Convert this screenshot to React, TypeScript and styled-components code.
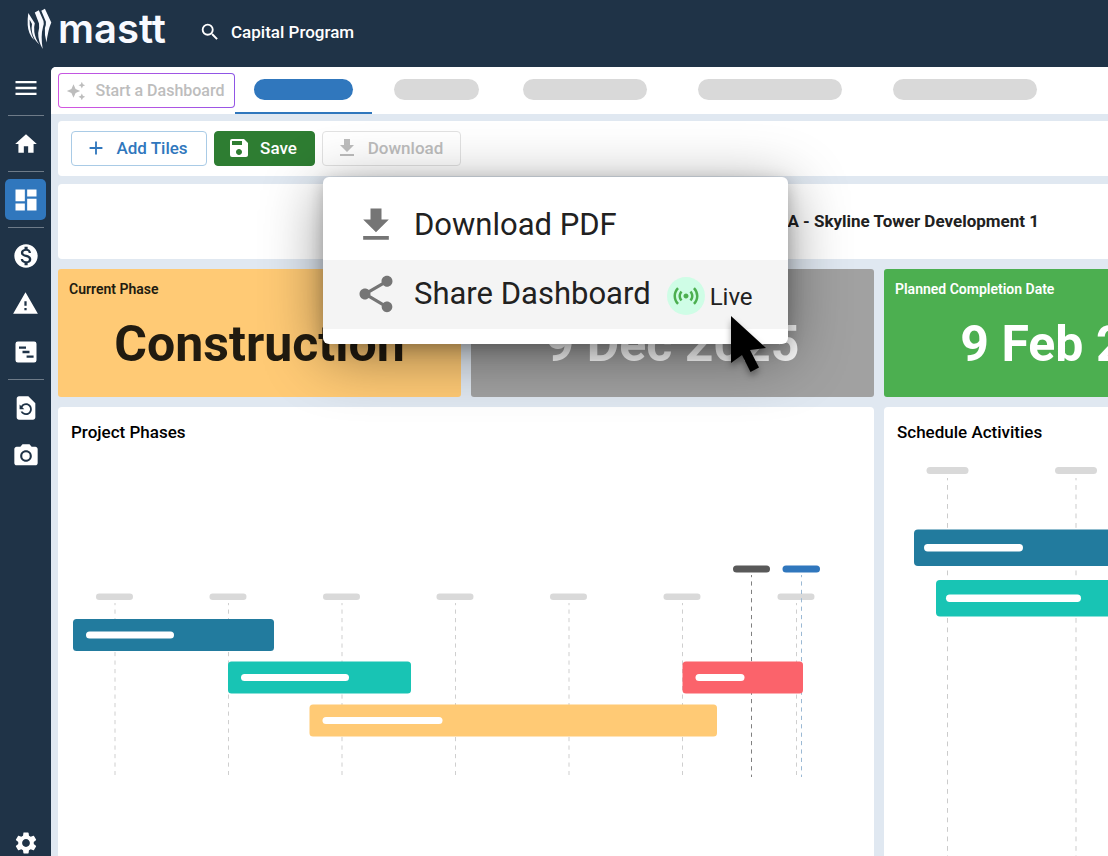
import React from "react";
import styled, { createGlobalStyle } from "styled-components";
import {
  MdAdd,
  MdAutoAwesome,
  MdCameraAlt,
  MdDashboard,
  MdFileDownload,
  MdHome,
  MdMenu,
  MdMonetizationOn,
  MdRestorePage,
  MdSave,
  MdSearch,
  MdSensors,
  MdSettings,
  MdShare,
  MdWarning,
} from "react-icons/md";

const color = {
  navy: "#1f3347",
  canvas: "#e0e8f1",
  blue: "#3077bd",
  green: "#2e7d32",
  placeholder: "#d9d9d9",
  disabled: "#bdbdbd",
  teal: "#227b9e",
  mint: "#18c4b4",
  amber: "#ffca75",
  coral: "#fb636b",
};

const GlobalStyle = createGlobalStyle`
  *, *::before, *::after { box-sizing: border-box; }
  body {
    margin: 0;
    background: ${color.navy};
    font-family: Roboto, "Liberation Sans", sans-serif;
    color: #212121;
    overflow: hidden;
  }
  button { font-family: inherit; cursor: pointer; }
  h1, h2, p { margin: 0; }
`;

const Page = styled.div`
  display: flex;
  flex-direction: column;
  height: 100vh;
`;

const Header = styled.header`
  display: flex;
  align-items: center;
  flex: none;
  height: 67px;
  padding: 0 0 4px 26px;
  color: #fff;
`;

const Brand = styled.a`
  display: flex;
  align-items: center;
  gap: 6px;
  width: 173px;
  color: #f8faff;
  text-decoration: none;
`;

const BrandName = styled.span`
  padding-bottom: 6px;
  font: 600 40px/48px Inter, sans-serif;
`;

const ProgramButton = styled.button`
  display: flex;
  align-items: center;
  gap: 10px;
  padding: 0;
  border: 0;
  background: none;
  color: #fff;
  font-size: 17px;
  font-weight: 500;
  line-height: 24px;
`;

const Body = styled.div`
  display: flex;
  flex: 1;
  min-height: 0;
`;

const Sidebar = styled.nav`
  display: flex;
  flex-direction: column;
  align-items: center;
  flex: none;
  width: 51px;
`;

const NavGroup = styled.div`
  display: flex;
  flex-direction: column;
  align-items: center;
  gap: 7px;
  width: 36px;
  padding: 7px 0;
  border-top: 1px solid #6e7b88;

  &:first-child {
    padding: 0 0 7px;
    border-top: 0;
  }
`;

const NavFooter = styled.div`
  flex: none;
  height: 34px;
  margin-top: auto;
`;

const NavButton = styled.button<{ $active?: boolean }>`
  display: flex;
  align-items: center;
  justify-content: center;
  flex: none;
  width: 41px;
  height: 41px;
  padding: 0;
  border: 0;
  border-radius: 5px;
  background: ${(p) => (p.$active ? color.blue : "transparent")};
  color: #fff;
`;

const Main = styled.main`
  display: flex;
  flex-direction: column;
  flex: 1;
  min-width: 0;
  overflow: hidden;
  border-top-left-radius: 5px;
  background: ${color.canvas};
`;

const TabBar = styled.div`
  display: flex;
  align-items: center;
  flex: none;
  height: 47px;
  padding-left: 7px;
  background: #fff;
`;

const StartButton = styled.button`
  display: flex;
  align-items: center;
  justify-content: center;
  gap: 9px;
  flex: none;
  width: 177px;
  height: 35px;
  padding: 0 2px 0 0;
  border: 1px solid transparent;
  border-radius: 4px;
  background:
    linear-gradient(#fff, #fff) padding-box,
    linear-gradient(45deg, #d556e0, #8a55e6) border-box;
  color: ${color.disabled};
  font-size: 16px;
  font-weight: 500;
`;

const Tab = styled.button<{ $active?: boolean; $pad: number }>`
  display: flex;
  align-items: center;
  flex: none;
  height: 47px;
  padding: 0 ${(p) => p.$pad}px;
  border: 0;
  border-bottom: 2px solid ${(p) => (p.$active ? color.blue : "transparent")};
  background: none;
`;

const TabPill = styled.span<{ $active?: boolean; $width: number }>`
  width: ${(p) => p.$width}px;
  height: 21px;
  border-radius: 11px;
  background: ${(p) => (p.$active ? color.blue : color.placeholder)};
`;

const Workspace = styled.div`
  display: flex;
  flex-direction: column;
  flex: 1;
  min-height: 0;
  gap: 8px;
  padding: 7px 0 0 7px;
`;

const Toolbar = styled.div`
  display: flex;
  align-items: center;
  flex: none;
  gap: 7px;
  height: 55px;
  padding-left: 13px;
  border-radius: 4px 0 0 4px;
  background: #fff;
`;

const ToolButton = styled.button<{ $kind: "outline" | "solid" | "muted"; $width: number }>`
  display: flex;
  align-items: center;
  justify-content: center;
  gap: 9px;
  width: ${(p) => p.$width}px;
  height: 35px;
  padding: 0 5px 2px 0;
  border: 1px solid
    ${(p) => ({ outline: "#a9cbe6", solid: color.green, muted: "#e2e2e2" })[p.$kind]};
  border-radius: 4px;
  background: ${(p) => (p.$kind === "solid" ? color.green : "transparent")};
  color: ${(p) => ({ outline: color.blue, solid: "#fff", muted: color.disabled })[p.$kind]};
  font-size: 17px;
  font-weight: 500;
`;

const MenuAnchor = styled.div`
  position: relative;
  z-index: 2;
`;

const Menu = styled.div`
  position: absolute;
  top: 46px;
  left: 1px;
  width: 465px;
  padding: 14px 0 15px;
  border-radius: 6px;
  background: #fff;
  box-shadow: 0 4px 16px rgba(0, 0, 0, 0.22), 0 12px 60px rgba(0, 0, 0, 0.42);
`;

const MenuItem = styled.button<{ $hovered?: boolean }>`
  display: flex;
  align-items: center;
  width: 100%;
  height: 69px;
  padding: 0 0 2px 31px;
  border: 0;
  background: ${(p) => (p.$hovered ? "#f4f4f4" : "transparent")};
  color: #212121;
  font-size: 31px;
  line-height: 40px;
  white-space: nowrap;
  svg { flex: none; }
`;

const MenuLabel = styled.span`
  margin-left: 16px;
`;

const LiveDot = styled.span`
  display: flex;
  align-items: center;
  justify-content: center;
  flex: none;
  width: 38px;
  height: 38px;
  margin: 5px 5px 0 16px;
  border-radius: 50%;
  background: #cffde6;
  color: #4caf50;
`;

const LiveLabel = styled.span`
  padding-top: 6px;
  font-size: 24px;
  line-height: 32px;
`;

const Pointer = styled.svg`
  position: absolute;
  top: 136px;
  left: 404px;
  filter: drop-shadow(0 4px 3px rgba(0, 0, 0, 0.35));
`;

const Board = styled.div`
  display: grid;
  flex: 1;
  grid-template-columns: repeat(3, minmax(403px, 1fr));
  grid-template-rows: 75px 128px minmax(450px, 1fr);
  gap: 10px;
`;

const TitleCard = styled.section`
  display: flex;
  align-items: center;
  justify-content: flex-end;
  grid-column: 1 / -1;
  padding: 0 248px 2px 0;
  border-radius: 4px;
  background: #fff;
`;

const ProjectTitle = styled.h1`
  font-size: 17px;
  font-weight: 700;
  line-height: 24px;
`;

const StatCard = styled.section<{ $bg: string; $ink: string }>`
  padding: 10px 11px;
  border-radius: 3px;
  background: ${(p) => p.$bg};
  color: ${(p) => p.$ink};
`;

const StatLabel = styled.h2`
  height: 20px;
  font-size: 14px;
  font-weight: 600;
  line-height: 20px;
`;

const StatValue = styled.p`
  padding-top: 15px;
  font-size: 50px;
  font-weight: 700;
  line-height: 60px;
  text-align: center;
  white-space: nowrap;
`;

const ChartCard = styled.section<{ $span?: number }>`
  grid-column: span ${(p) => p.$span ?? 1};
  overflow: hidden;
  border-radius: 4px 4px 0 0;
  background: #fff;
`;

const ChartTitle = styled.h2`
  height: 50px;
  padding: 13px 13px 0;
  color: #000;
  font-size: 17px;
  font-weight: 500;
  line-height: 24px;
`;

const Chart = styled.svg`
  display: block;
  width: 100%;
`;

const Logo = () => (
  <svg width="26" height="50" viewBox="0 0 26 50" fill="#f8faff" aria-hidden="true">
    <path d="M2.300 6L8.800 16.300Q7.700 20 8.300 25Q9.300 32 13.500 37.500Q7 32 6 25Q5.300 20 6 17L3.600 12.500Q3.400 24 8 33Q2.200 27 1.700 18Q1.500 11 2.300 6Z" />
    <path d="M12.800 3.300L17.500 14Q18.200 16 17 20Q14.500 29 16.700 42Q12 34 12.200 26Q13.600 20 13 16.500L8.800 5.500Z" />
    <path d="M18.900 1.800L25.300 15.500Q22 23 20.500 35.500Q18.300 28 18.900 21Q20.300 17.500 19.900 14.800L15.300 3.800Z" />
  </svg>
);

const ScheduleIcon = () => (
  <svg width="28" height="28" viewBox="0 0 24 24" fill="currentColor" aria-hidden="true">
    <path
      fillRule="evenodd"
      d="M5 3h14a2 2 0 0 1 2 2v14a2 2 0 0 1-2 2H5a2 2 0 0 1-2-2V5a2 2 0 0 1 2-2zM6 7.200v2h6v-2zM9 11v2h6v-2zM12.500 15v2h6v-2z"
    />
  </svg>
);

type Bar = { x: number; y: number; w: number; label: number; fill: string };

const tabs = [
  { pad: 22, width: 85 },
  { pad: 22, width: 124 },
  { pad: 29, width: 144 },
  { pad: 22, width: 144 },
];

const phaseTicks = [57, 170.500, 284, 397.500, 511, 624.500, 738.500];

const phases: Bar[] = [
  { x: 15, y: 162, w: 201, label: 88, fill: color.teal },
  { x: 170, y: 204.500, w: 183, label: 108, fill: color.mint },
  { x: 251.500, y: 247.500, w: 407.500, label: 120, fill: color.amber },
  { x: 624.500, y: 204.500, w: 120.500, label: 49, fill: color.coral },
];

const activities: Bar[] = [
  { x: 30, y: 72.500, w: 373, label: 99, fill: color.teal },
  { x: 52, y: 123, w: 351, label: 135, fill: color.mint },
];

const PhasesChart = () => (
  <Chart viewBox="0 0 816 399" role="img" aria-label="Project phases timeline">
    {phaseTicks.map((x) => (
      <g key={x}>
        <rect x={x - 19} y="136.500" width="37" height="6.500" rx="3.200" fill={color.placeholder} />
        <path d={`M${x} 146V318`} stroke="#cfcfcf" strokeDasharray="4.200 4.300" strokeDashoffset="2" />
      </g>
    ))}
    <path d="M693.500 118V320" stroke="#808080" strokeDasharray="4.200 4.200" strokeDashoffset="2" />
    <path d="M743.500 118V320" stroke="#9bb9d4" strokeDasharray="4.200 4.200" strokeDashoffset="2" />
    <rect x="675" y="108.500" width="37" height="7" rx="3.500" fill="#595959" />
    <rect x="724.500" y="108.500" width="37.500" height="7" rx="3.500" fill={color.blue} />
    {phases.map((b) => (
      <g key={b.fill}>
        <rect x={b.x} y={b.y} width={b.w} height="32" rx="3.500" fill={b.fill} />
        <rect x={b.x + 13} y={b.y + 12.500} width={b.label} height="7" rx="3.500" fill="#fff" />
      </g>
    ))}
  </Chart>
);

const ActivitiesChart = () => (
  <Chart viewBox="0 0 403 399" role="img" aria-label="Schedule activities timeline">
    {[63.500, 192, 320.500].map((x) => (
      <g key={x}>
        <rect x={x - 21} y="10" width="42" height="7" rx="3.500" fill={color.placeholder} />
        <path d={`M${x} 21V399`} stroke="#cbcbcb" strokeDasharray="4.800 4.700" strokeDashoffset="2.500" />
      </g>
    ))}
    {activities.map((b) => (
      <g key={b.fill}>
        <rect x={b.x} y={b.y} width={b.w} height="36.500" rx="4" fill={b.fill} />
        <rect x={b.x + 10} y={b.y + 14.500} width={b.label} height="7.500" rx="3.700" fill="#fff" />
      </g>
    ))}
  </Chart>
);

export default function App() {
  return (
    <Page>
      <GlobalStyle />
      <Header>
        <Brand href="#">
          <Logo />
          <BrandName>mastt</BrandName>
        </Brand>
        <ProgramButton>
          <MdSearch size={22} />
          Capital Program
        </ProgramButton>
      </Header>
      <Body>
        <Sidebar aria-label="Main">
          <NavGroup>
            <NavButton aria-label="Menu"><MdMenu size={28} /></NavButton>
          </NavGroup>
          <NavGroup>
            <NavButton aria-label="Home"><MdHome size={26} /></NavButton>
          </NavGroup>
          <NavGroup>
            <NavButton $active aria-label="Dashboards"><MdDashboard size={28} /></NavButton>
          </NavGroup>
          <NavGroup>
            <NavButton aria-label="Costs"><MdMonetizationOn size={28} /></NavButton>
            <NavButton aria-label="Risks"><MdWarning size={27} /></NavButton>
            <NavButton aria-label="Schedule"><ScheduleIcon /></NavButton>
          </NavGroup>
          <NavGroup>
            <NavButton aria-label="History"><MdRestorePage size={28} /></NavButton>
            <NavButton aria-label="Snapshots"><MdCameraAlt size={28} /></NavButton>
          </NavGroup>
          <NavFooter>
            <NavButton aria-label="Settings"><MdSettings size={26} /></NavButton>
          </NavFooter>
        </Sidebar>
        <Main>
          <TabBar>
            <StartButton>
              <MdAutoAwesome size={20} />
              Start a Dashboard
            </StartButton>
            <Tab $active $pad={19} aria-label="Current dashboard">
              <TabPill $active $width={99} />
            </Tab>
            {tabs.map((t, i) => (
              <Tab key={i} $pad={t.pad} aria-label={`Dashboard ${i + 2}`}>
                <TabPill $width={t.width} />
              </Tab>
            ))}
          </TabBar>
          <Workspace>
            <Toolbar>
              <ToolButton $kind="outline" $width={136}>
                <MdAdd size={22} />
                Add Tiles
              </ToolButton>
              <ToolButton $kind="solid" $width={101}>
                <MdSave size={24} />
                Save
              </ToolButton>
              <MenuAnchor>
                <ToolButton $kind="muted" $width={139} aria-haspopup="menu" aria-expanded="true">
                  <MdFileDownload size={24} />
                  Download
                </ToolButton>
                <Menu role="menu">
                  <MenuItem role="menuitem">
                    <MdFileDownload size={44} color="#757575" />
                    <MenuLabel>Download PDF</MenuLabel>
                  </MenuItem>
                  <MenuItem role="menuitem" $hovered>
                    <MdShare size={44} color="#757575" />
                    <MenuLabel>Share Dashboard</MenuLabel>
                    <LiveDot><MdSensors size={30} /></LiveDot>
                    <LiveLabel>Live</LiveLabel>
                  </MenuItem>
                  <Pointer width="44" height="64" viewBox="0 0 44 64" aria-hidden="true">
                    <path d="M4 3L39 35L23 37L32 54.500L23.500 59L15 42L4 50Z" fill="#000" />
                  </Pointer>
                </Menu>
              </MenuAnchor>
            </Toolbar>
            <Board>
              <TitleCard>
                <ProjectTitle>A - Skyline Tower Development 1</ProjectTitle>
              </TitleCard>
              <StatCard $bg={color.amber} $ink="#211b10">
                <StatLabel>Current Phase</StatLabel>
                <StatValue>Construction</StatValue>
              </StatCard>
              <StatCard $bg="#a1a1a1" $ink="#fff">
                <StatLabel />
                <StatValue>9 Dec 2025</StatValue>
              </StatCard>
              <StatCard $bg="#4caf50" $ink="#fff">
                <StatLabel>Planned Completion Date</StatLabel>
                <StatValue>9 Feb 2026</StatValue>
              </StatCard>
              <ChartCard $span={2}>
                <ChartTitle>Project Phases</ChartTitle>
                <PhasesChart />
              </ChartCard>
              <ChartCard>
                <ChartTitle>Schedule Activities</ChartTitle>
                <ActivitiesChart />
              </ChartCard>
            </Board>
          </Workspace>
        </Main>
      </Body>
    </Page>
  );
}
